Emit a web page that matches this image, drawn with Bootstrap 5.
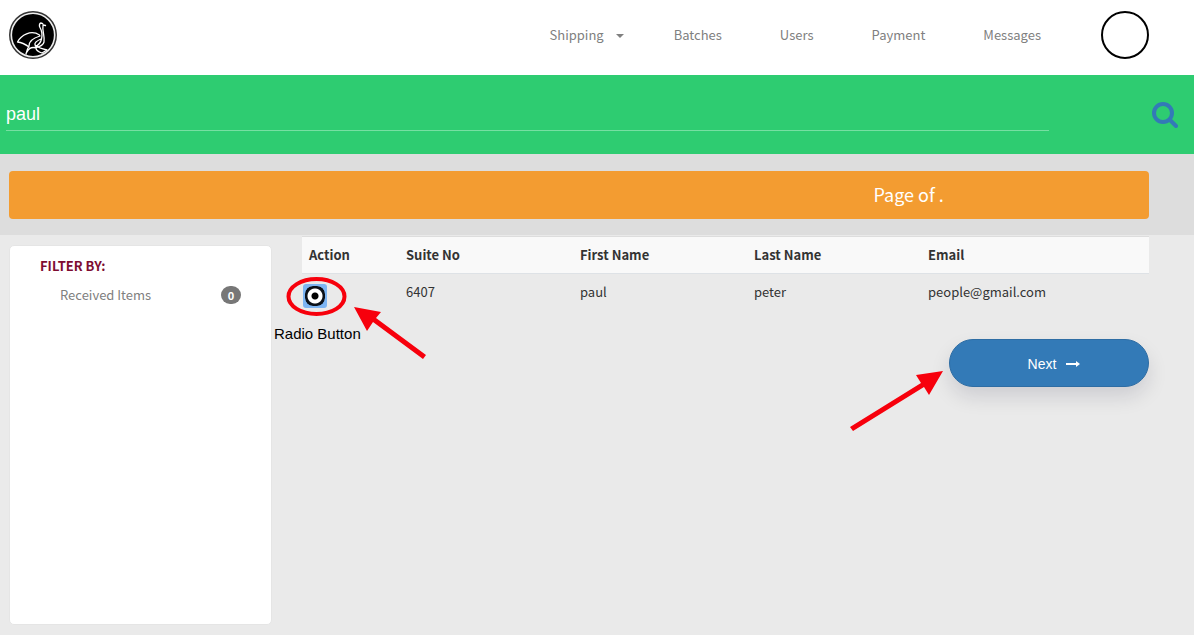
<!DOCTYPE html>
<html lang="en">
<head>
<meta charset="utf-8">
<meta name="viewport" content="width=device-width, initial-scale=1">
<title>User search</title>
<link href="https://cdn.jsdelivr.net/npm/bootstrap@5.3.0/dist/css/bootstrap.min.css" rel="stylesheet">
<style>
  body { background: #eaeaea; color: #333; font-family: "Noto Sans CJK SC", "Open Sans", sans-serif; font-size: 13px; line-height: 20px; }
  .gutters { padding-left: 9px; padding-right: 45px; }
  .topbar { height: 75px; padding-bottom: 5px; }
  .topbar .nav-link { color: #808080; padding: 0; }
  .topbar .dropdown-toggle::after { margin-left: 12px; vertical-align: 2px; border-width: 4px; border-bottom: 0; }
  .menu { gap: 58px; }
  .menu .dropdown { margin-right: -8px; }
  .avatar { width: 48px; height: 48px; border: 2px solid #000; margin-left: 2px; }
  .searchbar { background: #2ecc71; height: 79px; padding: 0 16px 0 6px; }
  .searchbar input { width: 89%; height: 32px; padding: 4px 0; border: 0; border-bottom: 1px solid #76dfa2; background: transparent; color: #fff; font: 18px "Liberation Sans", Arial, sans-serif; outline: 0; }
  .searchbar button { line-height: 0; }
  .band { background: #ddd; padding-top: 17px; padding-bottom: 16px; }
  .notice { background: #f39c31; height: 48px; color: #fff; font-size: 18px; border-radius: 4px; padding-right: 18%; padding-bottom: 2px; }
  .filter { width: 263px; min-height: 380px; border: 1px solid #e5e5e5; border-radius: 5px; padding: 10px 30px; margin-top: 10px; }
  .filter h2 { color: #7d0c31; font-size: 13px; line-height: 20px; font-weight: 700; margin: 0 0 9px; }
  .filter a { color: #808080; padding-left: 20px; }
  .count { background: #777; color: #fff; font-size: 11px; line-height: 18px; width: 20px; border-radius: 9px; font-weight: 700; }
  .results { margin-left: 30px; padding-top: 1px; }
  .results table { --bs-table-bg: transparent; color: #333; table-layout: fixed; margin: 0; }
  .results th { background: #f9f9f9; border-top: 1px solid #ddd; }
  .results tr > * { padding: 8px 7px; color: inherit; }
  .results td { border: 0; }
  .c-action { width: 97px; }
  .c-name { width: 174px; }
  .pick { position: relative; height: 64px; }
  .pick input { appearance: none; display: block; width: 20px; height: 20px; margin: 4px 0 0 -4px; border: 0; border-radius: 8px; box-shadow: 0 0 0 2px #7db5f3; background: radial-gradient(circle, #000 0 3px, #fff 4px 7px, #0c1118 8px); background-color: #0c1118; outline: 2px solid #7db5f3; outline-offset: 0; }
  .pick .focus-box { position: absolute; left: 1px; top: 10px; width: 24px; height: 24px; background: #7db5f3; border-radius: 3px; z-index: -1; }
  .mark-ring { position: absolute; left: -16px; top: 2px; }
  .mark-arrow { position: absolute; left: 52px; top: 32px; }
  .mark-label { position: absolute; left: -28px; top: 51px; font: 15px/18px "Liberation Sans", Arial, sans-serif; color: #000; white-space: nowrap; }
  .next-wrap { position: relative; margin-top: 1px; }
  .next-wrap .mark-pointer { position: absolute; right: 206px; top: 30px; }
  .next-btn { width: 200px; height: 48px; padding: 2px 0 0 10px; border: 1px solid #2e6da4; border-radius: 24px; background: #337ab7; color: #fff; font: 14px "Liberation Sans", Arial, sans-serif; box-shadow: 0 10px 20px rgba(0,0,40,.12); }
</style>
</head>
<body>
<header class="topbar gutters bg-white d-flex align-items-center justify-content-between">
  <a href="#" aria-label="Home" class="d-flex">
    <svg width="48" height="48" viewBox="0 0 48 48" fill="none" stroke="#fff" stroke-linecap="round" stroke-linejoin="round">
      <circle cx="24" cy="24" r="24" fill="#333" stroke="none"/>
      <circle cx="24" cy="24" r="21.7" fill="#000" stroke="#eee" stroke-width="1.6"/>
      <path stroke-width="1.3" d="M36.500 14.500L34.300 14Q34 12 32 12Q30 12.500 30.500 15.500C32.500 19 33.800 23 32.500 28Q31.500 33 26 36M34 14.500C33 20 36 25 35 31Q34 35 27 36.500M30.500 24C22 18.500 12 24 8.500 31Q14 31.500 20 36M31 25C24 27 20 31 20 35Q18 38 17 43M32 28Q25 31 26 34Q29 37 38 39L33 42Q27 40 27 37Q21 35 18 41"/>
    </svg>
  </a>
  <nav class="d-flex align-items-center menu" aria-label="Main">
    <div class="dropdown"><a class="nav-link dropdown-toggle" href="#" data-bs-toggle="dropdown">Shipping</a></div>
    <a class="nav-link" href="#">Batches</a>
    <a class="nav-link" href="#">Users</a>
    <a class="nav-link" href="#">Payment</a>
    <a class="nav-link" href="#">Messages</a>
    <a class="avatar rounded-circle" href="#" aria-label="Account"></a>
  </nav>
</header>

<form class="searchbar d-flex align-items-center justify-content-between">
  <input type="text" value="paul" aria-label="Search users">
  <button type="button" class="btn p-0 border-0" aria-label="Search">
    <svg width="26" height="26" viewBox="0 0 26 26" fill="none" stroke="#337ab7" stroke-width="4" stroke-linecap="round"><circle cx="11" cy="11" r="9"/><path d="M18 18L24 24"/></svg>
  </button>
</form>

<section class="band gutters">
  <div class="notice d-flex align-items-center justify-content-end">Page of .</div>
</section>

<main class="gutters d-flex align-items-start">
  <aside class="filter bg-white flex-shrink-0">
    <h2>FILTER BY:</h2>
    <div class="d-flex align-items-center justify-content-between">
      <a href="#" class="text-decoration-none">Received Items</a>
      <span class="count text-center">0</span>
    </div>
  </aside>
  <section class="results flex-grow-1">
    <table class="table">
      <colgroup><col class="c-action"><col class="c-name"><col class="c-name"><col class="c-name"><col></colgroup>
      <thead><tr><th>Action</th><th>Suite No</th><th>First Name</th><th>Last Name</th><th>Email</th></tr></thead>
      <tbody><tr>
        <td class="pick">
          <span class="focus-box"></span>
          <input type="radio" name="user" id="user-6407" checked>
          <svg class="mark-ring" width="62" height="41" fill="none" stroke="#f7000c" stroke-width="4"><ellipse cx="30.500" cy="20.500" rx="28" ry="17.500"/></svg>
          <svg class="mark-arrow" width="73" height="54" fill="#f7000c"><path d="M0 1L27 6L22 12L72 49L69 53L19 16L13 25Z"/></svg>
          <label class="mark-label" for="user-6407">Radio Button</label>
        </td>
        <td>6407</td><td>paul</td><td>peter</td><td>people@gmail.com</td>
      </tr></tbody>
    </table>
    <div class="next-wrap d-flex justify-content-end">
      <svg class="mark-pointer" width="94" height="64" fill="#f7000c"><path d="M94 2L80 26L75 18L4 62L1 58L72 14L67 6Z"/></svg>
      <button type="button" class="next-btn d-flex align-items-center justify-content-center gap-2">Next
        <svg width="16" height="10" viewBox="0 0 16 10" fill="none" stroke="#fff" stroke-width="2"><path d="M2 5H14"/><path d="M12 2L16 5L12 8Z" fill="#fff" stroke="none"/></svg>
      </button>
    </div>
  </section>
</main>
<script src="https://cdn.jsdelivr.net/npm/bootstrap@5.3.0/dist/js/bootstrap.bundle.min.js"></script>
</body>
</html>
